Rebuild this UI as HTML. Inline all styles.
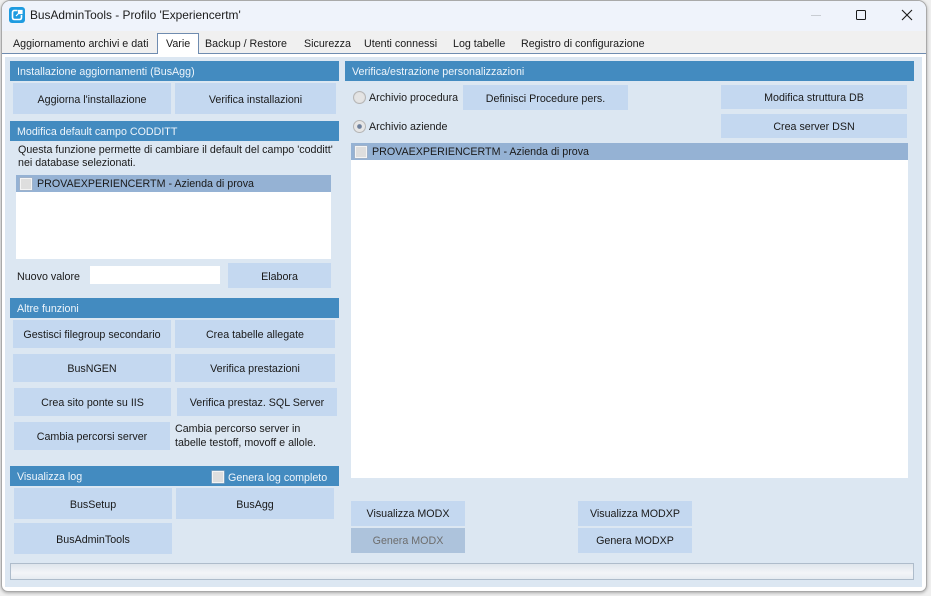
<!DOCTYPE html>
<html lang="it">
<head>
<meta charset="utf-8">
<title>BusAdminTools</title>
<style>
html,body{margin:0;padding:0;width:931px;height:596px;overflow:hidden;background:#efefef;}
*{box-sizing:border-box;}
body{font-family:"Liberation Sans",sans-serif;font-size:10.7px;color:#1a1a1a;position:relative;}
.a{position:absolute;white-space:nowrap;}
#win{position:absolute;left:2px;top:1px;width:924px;height:590px;background:#fff;border-radius:8px 8px 6px 6px;box-shadow:0 0 0 1px #a9a9a9,0 1px 3px 1px rgba(0,0,0,.3);}
#tb{left:2px;top:1px;width:924px;height:30px;background:#eff3fb;border-radius:8px 8px 0 0;}
.h{background:#438bc0;color:#eef5fb;height:20px;line-height:22px;padding-left:7px;}
.b{background:#c4d8f0;text-align:center;display:flex;align-items:center;justify-content:center;padding-top:1px;}
.b2{padding-top:3px;}
.t{line-height:14px;}
.tab{top:37px;line-height:14px;}
.list{background:#fff;}
.row{background:#95b2d4;height:17px;position:relative;line-height:19px;}
.cb{position:absolute;width:12px;height:12px;background:#dedede;border:1px solid #f4f4f4;box-shadow:0 0 0 .5px #a9b3bf;}
.rad{position:absolute;width:13px;height:13px;border-radius:50%;background:radial-gradient(circle,#e4e4e4 0 55%,#c8c8c8 100%);border:1px solid #b5b5b5;}
</style>
</head>
<body>
<div id="win"></div>
<div class="a" id="tb"></div>

<svg class="a" style="left:9px;top:7px" width="16" height="16" viewBox="0 0 16 16">
<rect x="0" y="0" width="16" height="16" rx="3" fill="#1e9be0"/>
<path d="M8.5 3.5H5.5Q3.5 3.5 3.5 5.5V10.5Q3.5 12.5 5.5 12.5H10.5Q12.5 12.5 12.5 10.5V8" fill="none" stroke="#fff" stroke-width="1.6"/>
<path d="M7 9L10 6M9.5 3.5H13V6.5H9.5Z" fill="#fff" stroke="#fff" stroke-width="1.2"/>
</svg>
<div class="a" style="left:30px;top:8px;font-size:11.9px;line-height:15px;color:#1c1c1c">BusAdminTools - Profilo 'Experiencertm'</div>

<div class="a" style="left:811px;top:15px;width:10px;height:1px;background:#c8ccd2"></div>
<div class="a" style="left:856px;top:10px;width:10px;height:10px;border:1.3px solid #1a1a1a;border-radius:1.5px"></div>
<svg class="a" style="left:901px;top:9px" width="12" height="12" viewBox="0 0 12 12"><path d="M1 1L11 11M11 1L1 11" stroke="#1a1a1a" stroke-width="1.1" fill="none"/></svg>

<div class="a" style="left:2px;top:31px;width:924px;height:22px;background:#f0f0f0"></div>
<div class="a" style="left:2px;top:53px;width:924px;height:1px;background:#6f8cb0"></div>
<div class="a" style="left:157px;top:33px;width:42px;height:21px;background:#fff;border:1px solid #6f8cb0;border-bottom:none"></div>

<div class="a tab" style="left:13px">Aggiornamento archivi e dati</div>
<div class="a tab" style="left:166px;top:37px">Varie</div>
<div class="a tab" style="left:205px">Backup / Restore</div>
<div class="a tab" style="left:304px">Sicurezza</div>
<div class="a tab" style="left:364px">Utenti connessi</div>
<div class="a tab" style="left:453px">Log tabelle</div>
<div class="a tab" style="left:521px">Registro di configurazione</div>

<div class="a" style="left:5px;top:57px;width:917px;height:530px;background:#dce7f2"></div>

<div class="a h" style="left:10px;top:61px;width:329px">Installazione aggiornamenti (BusAgg)</div>
<div class="a b b2" style="left:13px;top:83px;width:158px;height:31px">Aggiorna l'installazione</div>
<div class="a b b2" style="left:175px;top:83px;width:161px;height:31px">Verifica installazioni</div>

<div class="a h" style="left:10px;top:121px;width:329px">Modifica default campo CODDITT</div>
<div class="a t" style="left:18px;top:144px;line-height:13px">Questa funzione permette di cambiare il default del campo 'codditt'<br>nei database selezionati.</div>
<div class="a list" style="left:16px;top:175px;width:315px;height:84px">
  <div class="row"><span class="cb" style="left:4px;top:3px"></span><span style="position:absolute;left:21px">PROVAEXPERIENCERTM - Azienda di prova</span></div>
</div>
<div class="a t" style="left:17px;top:270px">Nuovo valore</div>
<div class="a" style="left:90px;top:266px;width:130px;height:18px;background:#fff"></div>
<div class="a b b2" style="left:228px;top:263px;width:103px;height:25px">Elabora</div>

<div class="a h" style="left:10px;top:298px;width:329px">Altre funzioni</div>
<div class="a b" style="left:13px;top:320px;width:158px;height:28px">Gestisci filegroup secondario</div>
<div class="a b" style="left:175px;top:320px;width:160px;height:28px">Crea tabelle allegate</div>
<div class="a b" style="left:13px;top:354px;width:158px;height:28px">BusNGEN</div>
<div class="a b" style="left:175px;top:354px;width:160px;height:28px">Verifica prestazioni</div>
<div class="a b" style="left:14px;top:388px;width:157px;height:28px">Crea sito ponte su IIS</div>
<div class="a b" style="left:177px;top:388px;width:160px;height:28px">Verifica prestaz. SQL Server</div>
<div class="a b" style="left:14px;top:422px;width:156px;height:28px">Cambia percorsi server</div>
<div class="a t" style="left:175px;top:422px;line-height:14px">Cambia percorso server in<br>tabelle testoff, movoff e allole.</div>

<div class="a h" style="left:10px;top:466px;width:329px">Visualizza log</div>
<div class="cb" style="left:212px;top:471px;width:12px;height:12px"></div>
<div class="a" style="left:228px;top:471px;line-height:14px;color:#eef5fb">Genera log completo</div>
<div class="a b b2" style="left:14px;top:488px;width:158px;height:31px">BusSetup</div>
<div class="a b b2" style="left:176px;top:488px;width:158px;height:31px">BusAgg</div>
<div class="a b b2" style="left:14px;top:523px;width:158px;height:31px">BusAdminTools</div>

<div class="a h" style="left:345px;top:61px;width:569px">Verifica/estrazione personalizzazioni</div>
<div class="rad" style="left:353px;top:91px"></div>
<div class="a t" style="left:369px;top:91px">Archivio procedura</div>
<div class="a b b2" style="left:463px;top:85px;width:165px;height:25px">Definisci Procedure pers.</div>
<div class="a b" style="left:721px;top:85px;width:186px;height:24px">Modifica struttura DB</div>
<div class="rad" style="left:353px;top:120px;background:radial-gradient(circle,#6d7f9c 0 26%,#e6e6e6 34% 100%)"></div>
<div class="a t" style="left:369px;top:120px">Archivio aziende</div>
<div class="a b" style="left:721px;top:114px;width:186px;height:24px">Crea server DSN</div>
<div class="a list" style="left:351px;top:143px;width:557px;height:335px">
  <div class="row"><span class="cb" style="left:4px;top:3px"></span><span style="position:absolute;left:21px">PROVAEXPERIENCERTM - Azienda di prova</span></div>
</div>

<div class="a b" style="left:351px;top:501px;width:114px;height:25px">Visualizza MODX</div>
<div class="a b" style="left:351px;top:528px;width:114px;height:25px;background:#adc3dc;color:#6d6d6d">Genera MODX</div>
<div class="a b" style="left:578px;top:501px;width:114px;height:25px">Visualizza MODXP</div>
<div class="a b" style="left:578px;top:528px;width:114px;height:25px">Genera MODXP</div>

<div class="a" style="left:10px;top:563px;width:904px;height:17px;border:1px solid #aebccb;background:linear-gradient(#dfe5ec,#f3f5f8 60%,#e6ebf1)"></div>
</body>
</html>
